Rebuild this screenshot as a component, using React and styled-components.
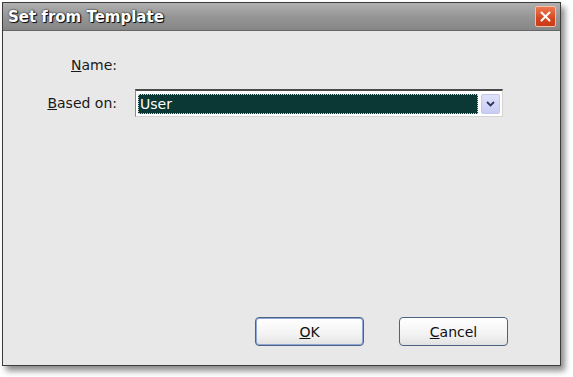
import React from 'react'
import styled, { createGlobalStyle } from 'styled-components'

const Global = createGlobalStyle`
  html, body {
    margin: 0;
    padding: 0;
    background: #ffffff;
    font-family: "DejaVu Sans", Tahoma, sans-serif;
  }
`

const Page = styled.div`
  width: 573px;
  height: 377px;
  padding: 2px 0 0 2px;
  box-sizing: border-box;
`

const Window = styled.div`
  width: 559px;
  height: 364px;
  box-sizing: border-box;
  border: 1px solid #3c3c3c;
  background: #e8e8e8;
  display: flex;
  flex-direction: column;
  box-shadow: 4px 5px 6px rgba(0, 0, 0, 0.45);
`

const TitleBar = styled.div`
  height: 27px;
  flex: none;
  display: flex;
  align-items: center;
  justify-content: space-between;
  padding: 0 4px 0 5px;
  background: linear-gradient(to bottom, #b0b0b0 0%, #969696 50%, #868686 100%);
  border-bottom: 1px solid #666;
`

const Title = styled.span`
  color: #ffffff;
  font-size: 15px;
  font-weight: bold;
  text-shadow: 1px 1px 0 #111, 0 0 2px #222, 1px 0 1px #333;
`

const CloseButton = styled.div`
  width: 21px;
  height: 21px;
  box-sizing: border-box;
  border: 1px solid #f3c1a8;
  border-radius: 2px;
  background: linear-gradient(to bottom, #ee7a52 0%, #d7451f 60%, #c93a17 100%);
  display: flex;
  align-items: center;
  justify-content: center;
`

const Body = styled.div`
  flex: 1;
  display: flex;
  flex-direction: column;
  padding: 0 52px 19px 0;
`

const Form = styled.div`
  display: grid;
  grid-template-columns: 114px 1fr;
  column-gap: 18px;
  row-gap: 12px;
  padding-top: 22px;
  align-items: center;
`

const Label = styled.span`
  font-size: 14px;
  color: #1a1a1a;
  text-align: right;
  height: ${p => p.tall ? '28px' : '24px'};
  line-height: ${p => p.tall ? '28px' : '24px'};
`

const Key = styled.span`
  text-decoration: underline;
`

const Empty = styled.div`
  height: 24px;
`

const Select = styled.div`
  width: 368px;
  height: 28px;
  box-sizing: border-box;
  border: 1px solid #d4d4d4;
  border-top: 2px solid #4a4a4a;
  border-left: 1px solid #8a8a8a;
  background: #ffffff;
  display: flex;
  align-items: center;
  padding: 2px;
  gap: 3px;
`

const Selected = styled.div`
  flex: 1;
  height: 20px;
  box-sizing: border-box;
  background: #0b3834;
  color: #ffffff;
  font-size: 14px;
  line-height: 18px;
  padding-left: 1px;
  border: 1px dotted #c8d8d0;
`

const DropButton = styled.div`
  width: 19px;
  height: 20px;
  box-sizing: border-box;
  border: 1px solid #c3c8e8;
  border-radius: 2px;
  background: linear-gradient(to bottom, #dfe2fa 0%, #c8cdf4 100%);
  display: flex;
  align-items: center;
  justify-content: center;
`

const Buttons = styled.div`
  margin-top: auto;
  display: flex;
  justify-content: flex-end;
  gap: 35px;
`

const Button = styled.button`
  width: 109px;
  height: 29px;
  box-sizing: border-box;
  border: 1px solid #4b6283;
  border-radius: 4px;
  background: linear-gradient(to bottom, #ffffff 0%, #f3f3f3 60%, #e2e2e2 100%);
  box-shadow: ${p => p.primary ? 'inset 0 0 0 1px #8fa6d6' : 'none'};
  font-family: "DejaVu Sans", Tahoma, sans-serif;
  font-size: 14px;
  color: #111;
  padding: 0;
`

export default function App() {
  return (
    <Page>
      <Global />
      <Window>
        <TitleBar>
          <Title>Set from Template</Title>
          <CloseButton>
            <svg width="11" height="11" viewBox="0 0 11 11">
              <path d="M1.5 1.5 L9.5 9.5 M9.5 1.5 L1.5 9.5" stroke="#ffffff" strokeWidth="2" strokeLinecap="round" />
            </svg>
          </CloseButton>
        </TitleBar>
        <Body>
          <Form>
            <Label><Key>N</Key>ame:</Label>
            <Empty />
            <Label tall><Key>B</Key>ased on:</Label>
            <Select>
              <Selected>User</Selected>
              <DropButton>
                <svg width="9" height="6" viewBox="0 0 9 6">
                  <path d="M1 1 L4.5 4.5 L8 1" stroke="#2d3760" strokeWidth="1.8" fill="none" />
                </svg>
              </DropButton>
            </Select>
          </Form>
          <Buttons>
            <Button primary><Key>O</Key>K</Button>
            <Button><Key>C</Key>ancel</Button>
          </Buttons>
        </Body>
      </Window>
    </Page>
  )
}
